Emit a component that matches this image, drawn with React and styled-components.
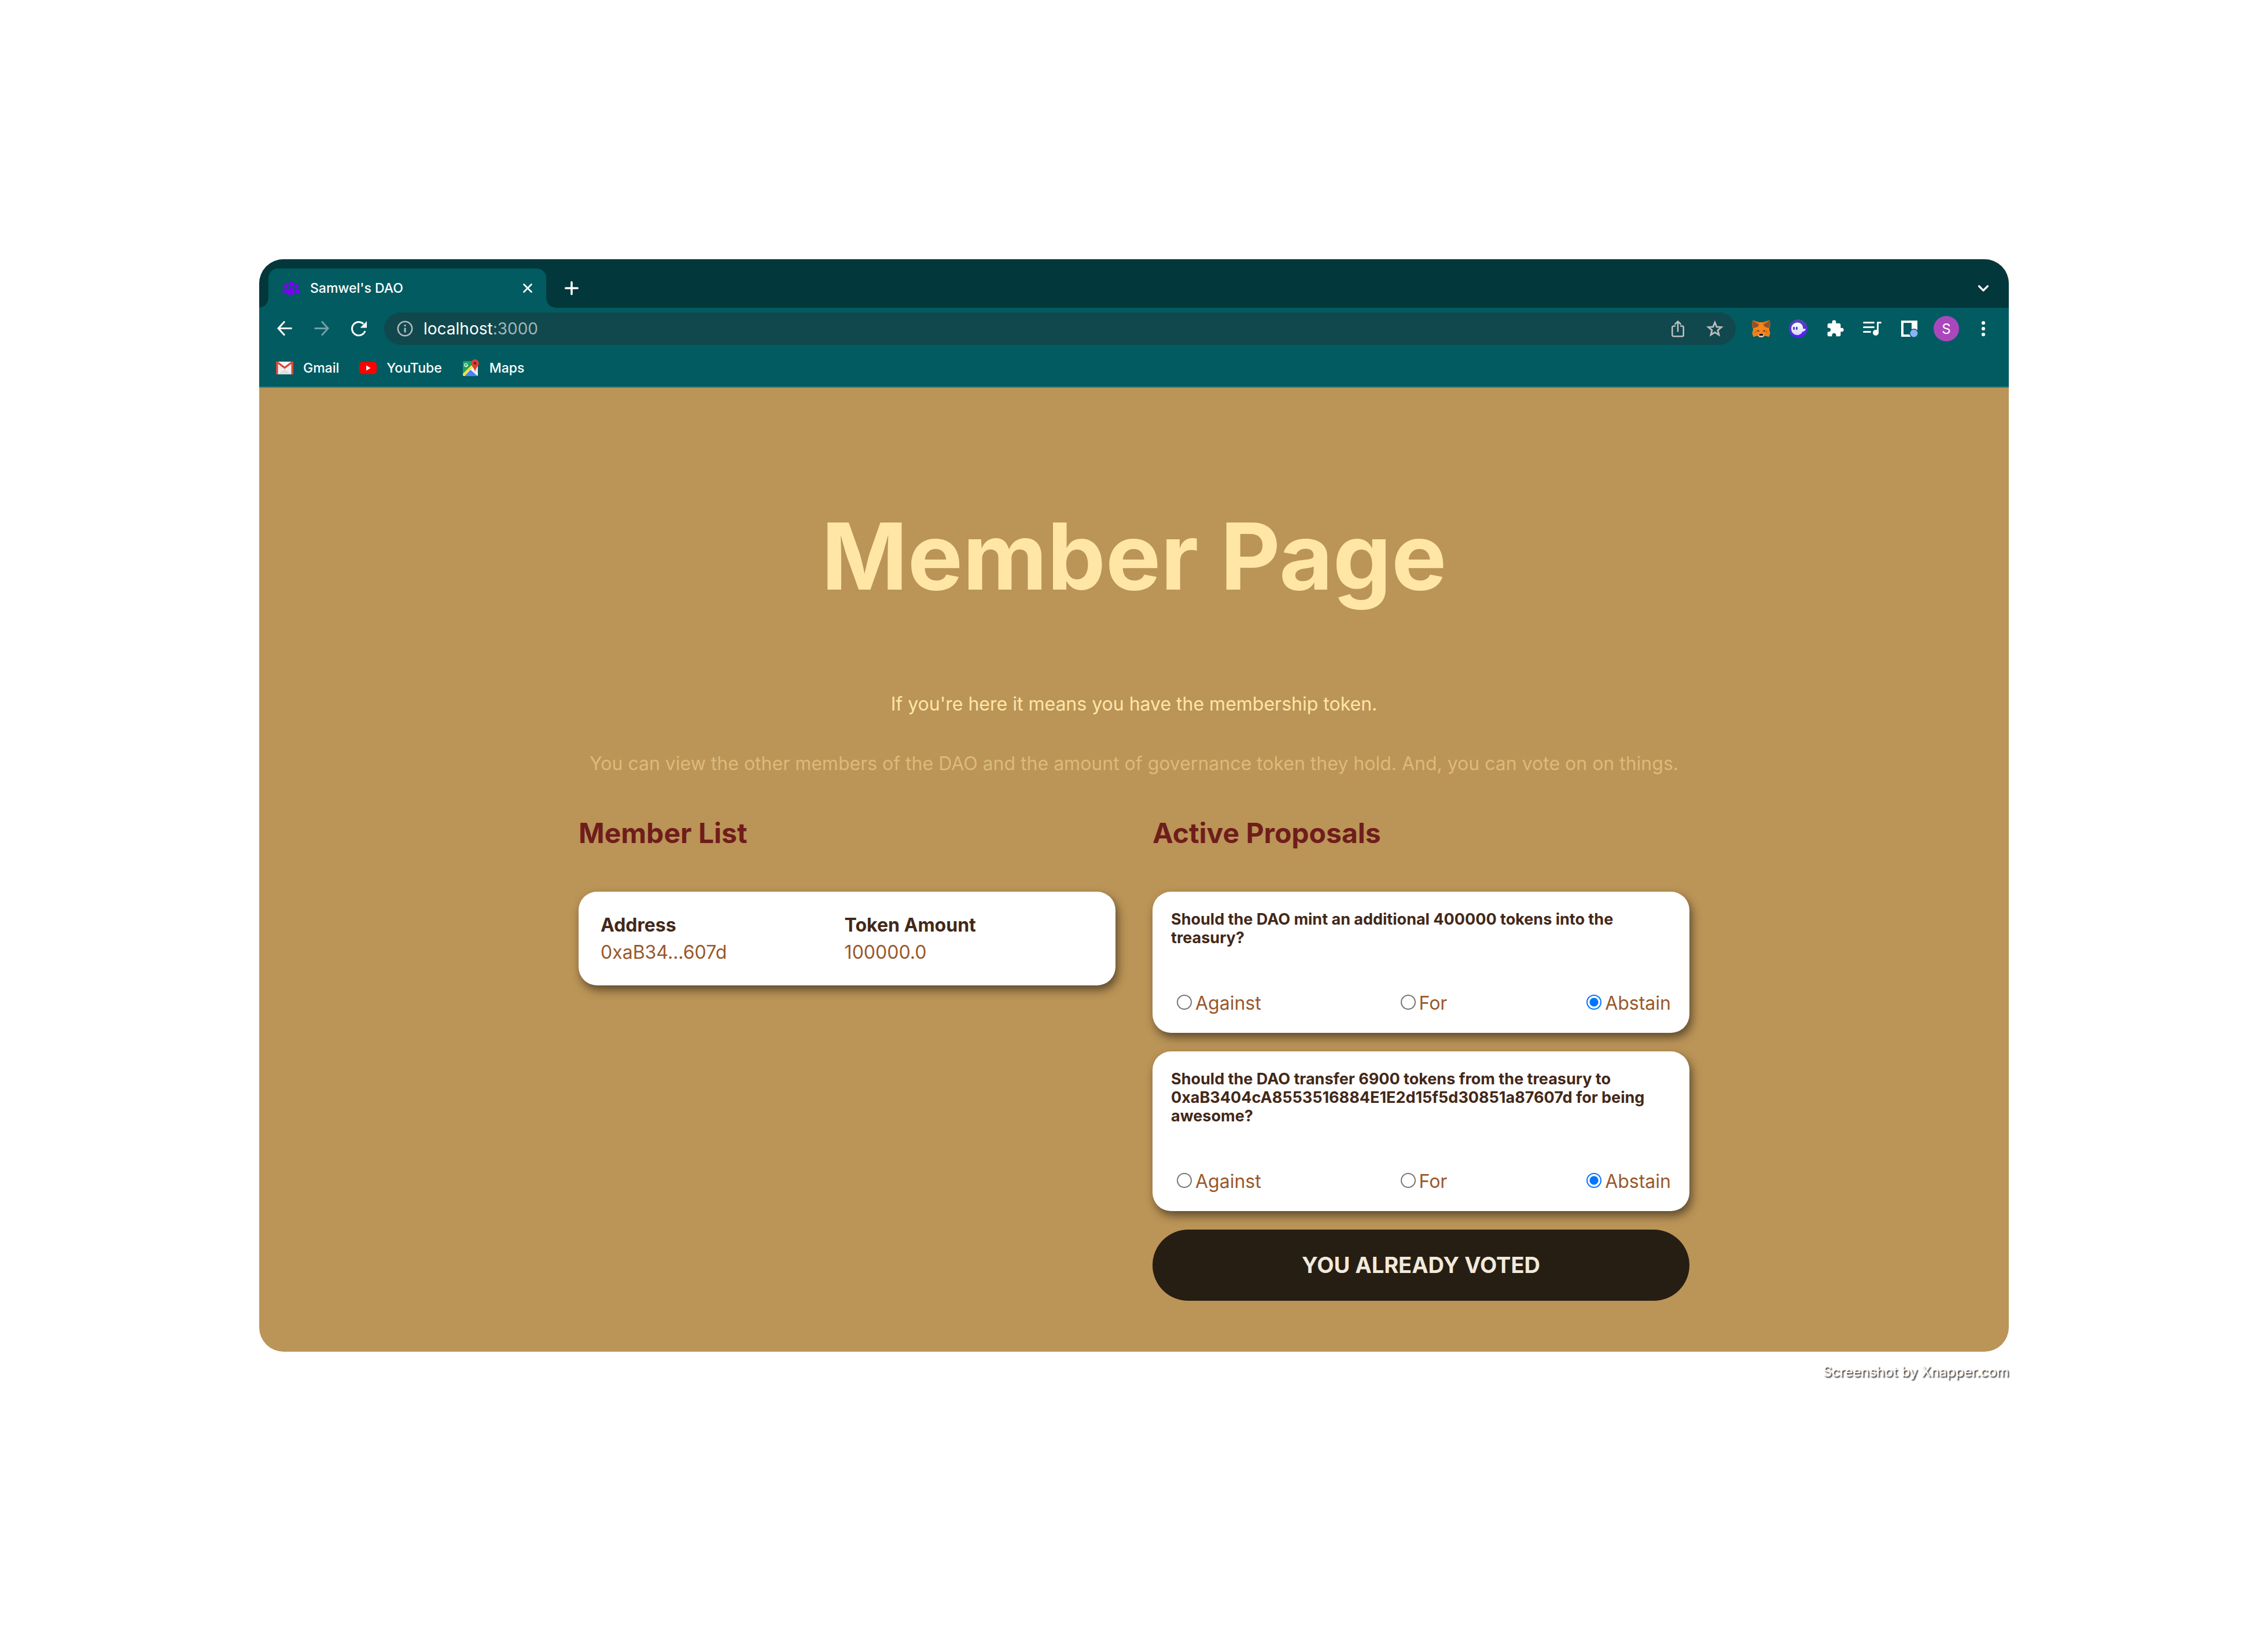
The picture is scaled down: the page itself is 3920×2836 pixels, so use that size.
import React from "react";
import styled, { createGlobalStyle } from "styled-components";

const GlobalStyle = createGlobalStyle`
  *, *::before, *::after { box-sizing: border-box; }
  body { margin: 0; background: #fff; font-family: Inter, "Liberation Sans", sans-serif; }
  button { font-family: inherit; border: 0; cursor: pointer; }
`;

const Stage = styled.div`
  min-height: 100vh;
  padding: 448px 448px 64px;
`;

const Window = styled.div`
  border-radius: 42px;
  overflow: hidden;
  background: #bb9457;
`;

const TabStrip = styled.div`
  display: flex;
  align-items: flex-end;
  height: 84px;
  padding: 0 28px 0 16px;
  background: #02373b;
`;

const Tab = styled.div`
  position: relative;
  display: flex;
  align-items: center;
  width: 480px;
  height: 68px;
  padding: 0 16px 0 24px;
  gap: 18px;
  border-radius: 16px 16px 0 0;
  background: #025b61;
  color: #fff;
  font-size: 23px;
  font-weight: 500;

  &::before, &::after {
    content: "";
    position: absolute;
    bottom: 0;
    width: 16px;
    height: 16px;
  }
  &::before {
    left: -16px;
    background: radial-gradient(circle at 0 0, transparent 15px, #025b61 16px);
  }
  &::after {
    right: -16px;
    background: radial-gradient(circle at 100% 0, transparent 15px, #025b61 16px);
  }
`;

const TabTitle = styled.span`
  flex: 1;
`;

const IconButton = styled.button`
  display: flex;
  align-items: center;
  justify-content: center;
  width: 32px;
  height: 32px;
  padding: 0;
  background: none;
  color: ${(p) => p.$color || "#fff"};
`;

const StripButtons = styled.div`
  display: flex;
  flex: 1;
  align-items: center;
  justify-content: space-between;
  height: 68px;
  padding-left: 28px;
`;

const Toolbar = styled.div`
  display: flex;
  align-items: center;
  gap: 32px;
  height: 72px;
  padding: 0 28px;
  background: #025b61;
`;

const AddressBar = styled.div`
  display: flex;
  flex: 1;
  align-items: center;
  gap: 32px;
  height: 56px;
  margin: 0 -4px;
  padding: 0 20px;
  border-radius: 28px;
  background: #10484d;
`;

const Url = styled.div`
  flex: 1;
  margin-left: -16px;
  color: #9fb6b8;
  font-size: 28px;
  line-height: 34px;
`;

const Host = styled.span`
  color: #fff;
`;

const Avatar = styled.button`
  width: 44px;
  height: 44px;
  margin: 0 -6px;
  padding: 0;
  border-radius: 50%;
  background: #ab47bc;
  color: #fff;
  font-size: 24px;
`;

const Bookmarks = styled.nav`
  display: flex;
  align-items: center;
  gap: 34px;
  height: 66px;
  padding: 0 28px;
  padding-bottom: 2px;
  background: #025b61;
  border-bottom: 2px solid #2f7d83;
`;

const Bookmark = styled.a`
  display: flex;
  align-items: center;
  gap: 16px;
  height: 60px;
  padding-top: 12px;
  padding-bottom: 10px;
  color: #fff;
  font-size: 23px;
  font-weight: 500;
  text-decoration: none;
`;

const Page = styled.main`
  max-width: 1920px;
  margin: 0 auto;
  padding: 194px 0 88px;
`;

const Title = styled.h1`
  margin: 0 0 139px;
  color: #ffe6a7;
  font-size: 160px;
  line-height: 194px;
  text-align: center;
`;

const Lead = styled.p`
  margin: 0 0 64px;
  color: #ffe6a7;
  font-size: 32px;
  line-height: 39px;
  text-align: center;
`;

const Note = styled(Lead)`
  margin-bottom: 72px;
  color: #dcba7b;
`;

const Columns = styled.div`
  display: grid;
  grid-template-columns: 1fr 1fr;
  gap: 64px;
`;

const Column = styled.section`
  display: flex;
  flex-direction: column;
  gap: 32px;
`;

const Heading = styled.h2`
  margin: 0 0 40px;
  color: #6f1d1b;
  font-size: 48px;
  line-height: 58px;
`;

const Card = styled.div`
  padding: 32px;
  border-radius: 32px;
  background: #fff;
  box-shadow: 4px 8px 16px rgba(0, 0, 0, 0.5);
`;

const MemberTable = styled.table`
  width: 100%;
  border-collapse: separate;
  border-spacing: 4px;
  font-size: 32px;
  line-height: 39px;
  text-align: left;

  th, td { padding: 2px; }
  th { color: #432818; font-weight: 700; }
  td { color: #99582a; }
`;

const Proposal = styled.fieldset`
  display: block;
  min-width: 0;
  margin: 0;
  padding: 0;
  border: 0;
`;

const Question = styled.h5`
  margin: 0 0 77px;
  color: #432818;
  font-size: 27px;
  line-height: 32px;
`;

const Choices = styled.div`
  display: flex;
  justify-content: space-between;
`;

const Choice = styled.label`
  display: flex;
  align-items: flex-start;
  color: #99582a;
  font-size: 32px;
  line-height: 39px;
`;

const Radio = styled.input`
  appearance: none;
  width: 26px;
  height: 26px;
  margin: 5px 6px 0 10px;
  border: 2px solid #767676;
  border-radius: 50%;
  background: #fff;

  &:checked {
    border-color: #0075ff;
    background: radial-gradient(circle, #0075ff 7px, #fff 8px);
  }
`;

const VoteButton = styled.button`
  padding: 38px;
  border-radius: 64px;
  background: #261e13;
  color: #f2e9dc;
  font-size: 38px;
  font-weight: 700;
  line-height: 47px;
`;

const Watermark = styled.footer`
  padding-top: 20px;
  color: #fff;
  font-size: 24px;
  line-height: 30px;
  text-align: right;
  text-shadow: 2px 2px 2px rgba(0, 0, 0, 0.85);
`;

const Line = ({ size = 32, w = 3, children, ...rest }) => (
  <svg width={size} height={size} viewBox={`0 0 ${size} ${size}`} fill="none" stroke="currentColor"
    strokeWidth={w} strokeLinecap="round" strokeLinejoin="round" aria-hidden="true" {...rest}>
    {children}
  </svg>
);

const PeopleIcon = () => (
  <svg width="30" height="30" viewBox="0 0 30 30" fill="#7a00f5" aria-hidden="true">
    <ellipse cx="15" cy="8.200" rx="4.300" ry="4.500" />
    <circle cx="6.200" cy="11.300" r="3.500" />
    <circle cx="24.300" cy="11.300" r="3.500" />
    <path d="M8.800 25.800C8.800 18 10.500 14.200 15 14.200s6.200 3.800 6.200 11.600q-6.200 1.400-12.400 0z" />
    <path d="M.3 24.300c0-5.500 1.800-8.700 5-8.700 1.500 0 2.700.5 3.500 1.500-1 2-1.400 4.200-1.500 7.200q-3.500.7-7 0zM29.700 24.300c0-5.500-1.800-8.700-5-8.700-1.500 0-2.700.5-3.500 1.500 1 2 1.400 4.200 1.500 7.200q3.500.7 7 0z" />
  </svg>
);

const BackIcon = () => <Line><path d="M28.500 15.500H5M16 3.500l-11 12 11 12" strokeLinecap="butt" strokeLinejoin="miter" /></Line>;
const ForwardIcon = () => <Line><path d="M3.500 15.500H27M16 3.500l11 12-11 12" strokeLinecap="butt" strokeLinejoin="miter" /></Line>;
const ReloadIcon = () => (
  <Line>
    <path d="M27 20A11.600 11.600 0 1 1 24.200 7.800" strokeLinecap="butt" />
    <path d="M30 3v11.500H18.500z" fill="currentColor" stroke="none" />
  </Line>
);
const InfoIcon = () => (
  <Line w={2.600}>
    <circle cx="16" cy="16" r="12.200" />
    <path d="M16 14.500v8M16 9v3" strokeLinecap="butt" strokeWidth="3" />
  </Line>
);
const ShareIcon = () => (
  <Line w={2.600}>
    <path d="M11 11.500H8.500a2.200 2.200 0 0 0-2.200 2.200v13.300a2.200 2.200 0 0 0 2.200 2.200h15a2.200 2.200 0 0 0 2.200-2.200V13.700a2.200 2.200 0 0 0-2.200-2.200H21M16 20.500V4M11.200 8.200L16 3.400l4.800 4.800" />
  </Line>
);
const StarIcon = () => (
  <Line w={2.800}>
    <path d="M16 5.200l3.100 7.600 8.200.6-6.300 5.300 2 8-7-4.300-7 4.300 2-8-6.300-5.300 8.200-.6z" strokeLinejoin="miter" />
  </Line>
);
const FoxIcon = () => (
  <svg width="32" height="32" viewBox="0 0 32 32" aria-hidden="true">
    <path d="M1 1.500L12.500 5h7L31 1.500l.8 7.500-2 8.500 1.700 6-2 6.500-7-2-3.500 2.800h-6L9.500 28l-7 2-2-6.500 1.700-6L.2 9z" fill="#f6851b" />
    <path d="M1 1.500l11.500 7.800L9.500 13l-6.800 2.300L.4 9zM31 1.500L19.500 9.300l3 3.700 6.800 2.300L31.600 9z" fill="#975026" />
    <path d="M1 1.500L12.500 5v4.300zM31 1.500L19.500 5v4.300z" fill="#e2761b" />
    <path d="M2 23.500h6.500L10 28l-7.500 2-2-6.500zM30 23.500h-6.500L22 28l7.500 2 2-6.500z" fill="#f0801c" />
    <path d="M7.500 17.500L2.200 23.500h7zM24.500 17.500l5.300 6h-7z" fill="#e2701b" />
    <path d="M9.200 18l4.800 2.400-4.600.6zM22.800 18L18 20.400l4.600.6z" fill="#3d3a45" />
    <path d="M10.500 28l2.500-2.500h6l2.500 2.500-2.800 3h-5.400z" fill="#d5bfb2" />
    <path d="M13.200 25h5.600l.6 3h-6.800z" fill="#161616" />
  </svg>
);
const GhostIcon = () => (
  <svg width="32" height="32" viewBox="0 0 32 32" aria-hidden="true">
    <defs>
      <linearGradient id="orb" x1="0" y1="0" x2="0" y2="1">
        <stop offset="0" stopColor="#534bb1" /><stop offset="1" stopColor="#551bf9" />
      </linearGradient>
      <linearGradient id="body" x1="0" y1="0" x2="0" y2="1">
        <stop offset="0" stopColor="#fff" /><stop offset="1" stopColor="#d9d4f4" />
      </linearGradient>
    </defs>
    <circle cx="16" cy="16" r="16" fill="url(#orb)" />
    <path d="M4 16C4 10 9 5.500 14.800 5.500c5.700 0 9.700 4.500 9.700 10.500 1 .5 3 .2 4.500.2-.3 3-2.500 4.800-5.500 5-1.500 3-4.500 5.800-9 5.800C8 27 4 22 4 16z" fill="url(#body)" />
    <rect x="7.200" y="12.800" width="2.800" height="5.400" rx="1.400" fill="#4a35c4" />
    <rect x="12" y="12.800" width="2.800" height="5.400" rx="1.400" fill="#4a35c4" />
  </svg>
);
const PuzzleIcon = () => (
  <svg width="32" height="32" viewBox="0 0 24 24" fill="currentColor" aria-hidden="true">
    <path d="M20.500 11H19V7c0-1.100-.9-2-2-2h-4V3.500a2.500 2.500 0 0 0-5 0V5H4c-1.100 0-1.990.9-1.990 2v3.800H3.500c1.490 0 2.700 1.210 2.700 2.700s-1.210 2.700-2.700 2.700H2V20c0 1.100.9 2 2 2h3.800v-1.500c0-1.490 1.210-2.700 2.700-2.700s2.700 1.210 2.700 2.700V22H17c1.100 0 2-.9 2-2v-4h1.500a2.500 2.500 0 0 0 0-5z" />
  </svg>
);
const QueueIcon = () => (
  <Line>
    <path d="M1.500 5.500h17M1.500 13.500h17M1.500 21.500h11M25.500 23V5.500h5" />
    <circle cx="22" cy="23" r="5" fill="currentColor" stroke="none" />
  </Line>
);
const PanelIcon = () => (
  <svg width="32" height="32" viewBox="0 0 32 32" aria-hidden="true">
    <path d="M2 2h28v28H2zM6 6v20h14V6z" fill="#fff" fillRule="evenodd" />
    <circle cx="24" cy="24" r="8" fill="#025b61" />
    <circle cx="24" cy="24" r="6.500" fill="#8ab4f8" />
  </svg>
);
const DotsIcon = () => (
  <svg width="32" height="32" viewBox="0 0 32 32" fill="currentColor" aria-hidden="true">
    <circle cx="16" cy="6" r="3.100" /><circle cx="16" cy="16" r="3.100" /><circle cx="16" cy="26" r="3.100" />
  </svg>
);
const GmailIcon = () => (
  <svg width="32" height="32" viewBox="0 0 32 32" aria-hidden="true">
    <rect x="1" y="5" width="30" height="22" rx="2" fill="#eceff1" />
    <path d="M4.500 27L16 18l11.500 9z" fill="#dedede" />
    <path d="M4 5L16 13.500 28 5z" fill="#f7f7f7" />
    <path d="M1 7a2 2 0 0 1 2-2h1.500L16 13.500 27.500 5H29a2 2 0 0 1 2 2v18a2 2 0 0 1-2 2h-1.500V9L16 17.500 4.500 9v18H3a2 2 0 0 1-2-2z" fill="#db4437" />
  </svg>
);
const YouTubeIcon = () => (
  <svg width="32" height="32" viewBox="0 0 32 32" aria-hidden="true">
    <rect x="1" y="5.500" width="30" height="21" rx="5" fill="#f00" />
    <path d="M13 11.500v9l7.500-4.500z" fill="#fff" />
  </svg>
);
const MapsIcon = () => (
  <svg width="32" height="32" viewBox="0 0 32 32" aria-hidden="true">
    <clipPath id="sheet"><rect x="2" y="4" width="26" height="26" rx="2.500" /></clipPath>
    <g clipPath="url(#sheet)">
      <rect x="2" y="4" width="26" height="26" fill="#1fa15d" />
      <path d="M17 15L28 4v26z" fill="#e6e6e6" />
      <path d="M2 30l14-12 13 13z" fill="#4285f4" />
      <path d="M14 18l3-3 13 13v4z" fill="#f5f5f5" />
      <path d="M0 28L18 10l3 3L4 31z" fill="#ffe047" />
    </g>
    <path d="M10.800 10H8v1.500h1.300a2 2 0 1 1-.5-2.200l1-1a3.400 3.400 0 1 0 1 1.700z" fill="#fff" />
    <path d="M23 1a6.800 6.800 0 0 0-6.800 6.800c0 5 5.300 7 6.800 14.700 1.500-7.700 6.800-9.700 6.800-14.700A6.800 6.800 0 0 0 23 1z" fill="#db4437" />
    <circle cx="23" cy="7.800" r="2.500" fill="#7b231e" />
  </svg>
);

const members = [{ address: "0xaB34...607d", amount: "100000.0" }];
const votes = ["Against", "For", "Abstain"];
const proposals = [
  "Should the DAO mint an additional 400000 tokens into the treasury?",
  "Should the DAO transfer 6900 tokens from the treasury to 0xaB3404cA8553516884E1E2d15f5d30851a87607d for being awesome?",
];

function Browser() {
  return (
    <header>
      <TabStrip>
        <Tab>
          <PeopleIcon />
          <TabTitle>Samwel's DAO</TabTitle>
          <IconButton aria-label="Close tab">
            <Line w={2.800}><path d="M9.500 9.500l13 13M22.500 9.500l-13 13" /></Line>
          </IconButton>
        </Tab>
        <StripButtons>
          <IconButton aria-label="New tab">
            <Line w={3.600}><path d="M16 5.800v20.400M5.800 16h20.400" /></Line>
          </IconButton>
          <IconButton aria-label="Search tabs">
            <Line w={3.200}><path d="M8.500 12.500l7.500 7.500 7.500-7.500" /></Line>
          </IconButton>
        </StripButtons>
      </TabStrip>
      <Toolbar>
        <IconButton aria-label="Back"><BackIcon /></IconButton>
        <IconButton aria-label="Forward" $color="#73a0a5"><ForwardIcon /></IconButton>
        <IconButton aria-label="Reload"><ReloadIcon /></IconButton>
        <AddressBar>
          <IconButton aria-label="Site information" $color="#b5b9bd"><InfoIcon /></IconButton>
          <Url><Host>localhost</Host>:3000</Url>
          <IconButton aria-label="Share" $color="#bdbdbf"><ShareIcon /></IconButton>
          <IconButton aria-label="Bookmark this page" $color="#bdbdbf"><StarIcon /></IconButton>
        </AddressBar>
        <IconButton aria-label="MetaMask"><FoxIcon /></IconButton>
        <IconButton aria-label="Phantom"><GhostIcon /></IconButton>
        <IconButton aria-label="Extensions"><PuzzleIcon /></IconButton>
        <IconButton aria-label="Media controls"><QueueIcon /></IconButton>
        <IconButton aria-label="Side panel"><PanelIcon /></IconButton>
        <Avatar aria-label="Profile">S</Avatar>
        <IconButton aria-label="Menu"><DotsIcon /></IconButton>
      </Toolbar>
      <Bookmarks>
        <Bookmark href="#gmail"><GmailIcon />Gmail</Bookmark>
        <Bookmark href="#youtube"><YouTubeIcon />YouTube</Bookmark>
        <Bookmark href="#maps"><MapsIcon />Maps</Bookmark>
      </Bookmarks>
    </header>
  );
}

export default function App() {
  return (
    <>
      <GlobalStyle />
      <Stage>
        <Window>
          <Browser />
          <Page>
            <Title>Member Page</Title>
            <Lead>If you're here it means you have the membership token.</Lead>
            <Note>
              You can view the other members of the DAO and the amount of governance token they hold. And, you can
              vote on on things.
            </Note>
            <Columns>
              <Column>
                <Heading>Member List</Heading>
                <Card>
                  <MemberTable>
                    <thead>
                      <tr><th>Address</th><th>Token Amount</th></tr>
                    </thead>
                    <tbody>
                      {members.map((m) => (
                        <tr key={m.address}><td>{m.address}</td><td>{m.amount}</td></tr>
                      ))}
                    </tbody>
                  </MemberTable>
                </Card>
              </Column>
              <Column>
                <Heading>Active Proposals</Heading>
                {proposals.map((question, i) => (
                  <Card key={question}>
                    <Proposal aria-labelledby={`question-${i}`}>
                      <Question id={`question-${i}`}>{question}</Question>
                      <Choices>
                        {votes.map((vote) => (
                          <Choice key={vote} htmlFor={`${i}-${vote}`}>
                            <Radio type="radio" id={`${i}-${vote}`} name={`proposal-${i}`} value={vote}
                              defaultChecked={vote === "Abstain"} />
                            {vote}
                          </Choice>
                        ))}
                      </Choices>
                    </Proposal>
                  </Card>
                ))}
                <VoteButton type="button">YOU ALREADY VOTED</VoteButton>
              </Column>
            </Columns>
          </Page>
        </Window>
        <Watermark>Screenshot by Xnapper.com</Watermark>
      </Stage>
    </>
  );
}
